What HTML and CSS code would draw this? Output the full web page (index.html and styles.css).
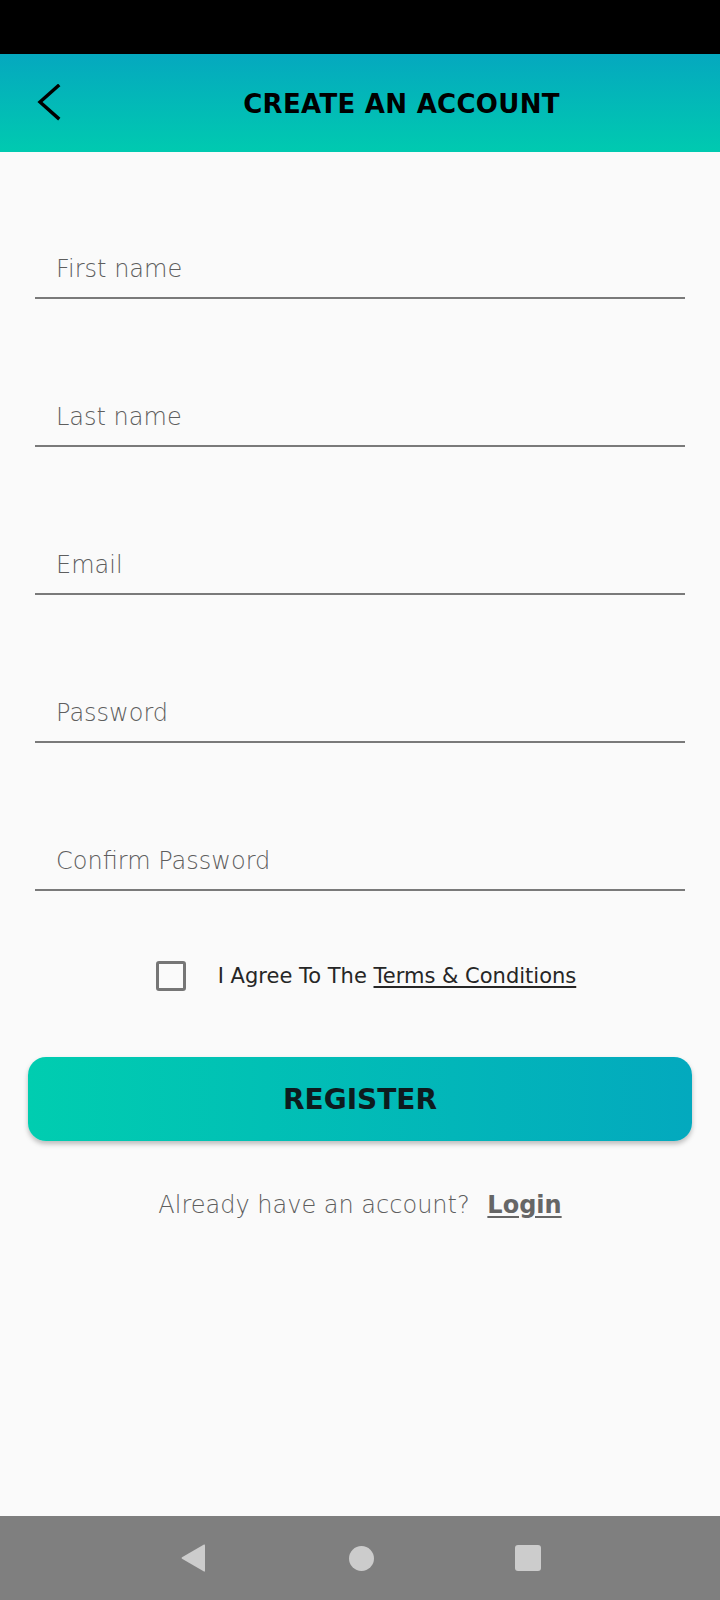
FILE: index.html
```html
<!DOCTYPE html>
<html>
<head>
<meta charset="utf-8">
<link rel="stylesheet" href="styles.css">
</head>
<body>
<div class="screen">
  <div class="status-bar"></div>
  <header class="app-bar">
    <div class="back">
      <svg width="24" height="40" viewBox="0 0 24 40"><path d="M21 2 L3 18 L21 34" fill="none" stroke="#000" stroke-width="3.4" stroke-linecap="square" stroke-linejoin="miter"/></svg>
    </div>
    <h1 class="title">CREATE AN ACCOUNT</h1>
  </header>
  <main class="content">
    <form class="form">
      <div class="field"><span class="placeholder">First name</span></div>
      <div class="field"><span class="placeholder">Last name</span></div>
      <div class="field"><span class="placeholder">Email</span></div>
      <div class="field"><span class="placeholder">Password</span></div>
      <div class="field"><span class="placeholder">Confirm Password</span></div>
    </form>
    <div class="agree">
      <span class="checkbox"></span>
      <span class="agree-text">I Agree To The <u>Terms &amp; Conditions</u></span>
    </div>
    <button class="register">REGISTER</button>
    <p class="login-line">Already have an account? <a class="login">Login</a></p>
  </main>
  <nav class="nav-bar">
    <svg class="nav-back" width="26" height="30" viewBox="0 0 26 30"><path d="M24 1.5 Q25 1 25 2.5 L25 27.5 Q25 29 24 28.5 L2 15.8 Q1 15 2 14.2 Z" fill="#cccccc"/></svg>
    <span class="nav-home"></span>
    <span class="nav-recent"></span>
  </nav>
</div>
</body>
</html>
```
FILE: styles.css
```css
html, body {
  margin: 0;
  padding: 0;
}
body {
  background: #fafafa;
  font-family: "DejaVu Sans", "Liberation Sans", sans-serif;
}
.screen {
  width: 720px;
  height: 1600px;
  display: flex;
  flex-direction: column;
  background: #fafafa;
}
.status-bar {
  height: 54px;
  background: #000;
  flex: none;
}
.app-bar {
  height: 98px;
  flex: none;
  display: flex;
  align-items: center;
  background: linear-gradient(180deg, #05a8bf 0%, #00cab0 100%);
}
.back {
  width: 83px;
  display: flex;
  justify-content: flex-start;
  padding-left: 37px;
  box-sizing: border-box;
  padding-top: 2px;
}
.title {
  flex: 1;
  margin: 0;
  text-align: center;
  font-size: 26px;
  font-weight: bold;
  color: #000;
  letter-spacing: 0.3px;
  padding-right: 0;
  padding-top: 2px;
}
.content {
  flex: 1;
  display: flex;
  flex-direction: column;
}
.form {
  display: flex;
  flex-direction: column;
  gap: 2px;
  padding: 1px 35px 0;
}
.field {
  height: 146px;
  box-sizing: border-box;
  border-bottom: 2px solid #7a7a7a;
  display: flex;
  align-items: flex-end;
  padding: 0 0 13px 21px;
}
.placeholder {
  font-size: 24px;
  font-weight: 300;
  color: #5e5e5e;
  line-height: 30px;
}
.agree {
  display: flex;
  align-items: center;
  justify-content: center;
  gap: 32px;
  margin-top: 70px;
  padding-left: 12px;
}
.checkbox {
  width: 30px;
  height: 30px;
  box-sizing: border-box;
  border: 3px solid #767676;
  border-radius: 3px;
}
.agree-text {
  font-size: 21px;
  color: #262626;
}
.agree-text u {
  text-underline-offset: 3px;
  text-decoration-thickness: 1.5px;
}
.register {
  margin: 66px 28px 0;
  height: 84px;
  border: none;
  border-radius: 18px;
  background: linear-gradient(90deg, #00cdb0 0%, #03a9be 100%);
  box-shadow: 0 3px 5px rgba(0,0,0,0.25);
  font-family: "DejaVu Sans", sans-serif;
  font-size: 28px;
  font-weight: bold;
  color: #0d1b1e;
  padding: 0;
}
.login-line {
  margin: 50px 0 0;
  text-align: center;
  font-size: 24px;
  font-weight: 300;
  color: #5e5e5e;
  padding-left: 0;
}
.login {
  font-weight: bold;
  color: #666;
  text-decoration: underline;
  text-underline-offset: 3px;
  margin-left: 10px;
}
.nav-bar {
  height: 84px;
  flex: none;
  background: #7f7f7f;
  display: flex;
  align-items: center;
  justify-content: center;
  gap: 0;
}
.nav-back {
  margin-right: 143px;
}
.nav-home {
  width: 25px;
  height: 25px;
  border-radius: 50%;
  background: #cccccc;
}
.nav-recent {
  width: 26px;
  height: 26px;
  border-radius: 3px;
  background: #cccccc;
  margin-left: 141px;
}
```
